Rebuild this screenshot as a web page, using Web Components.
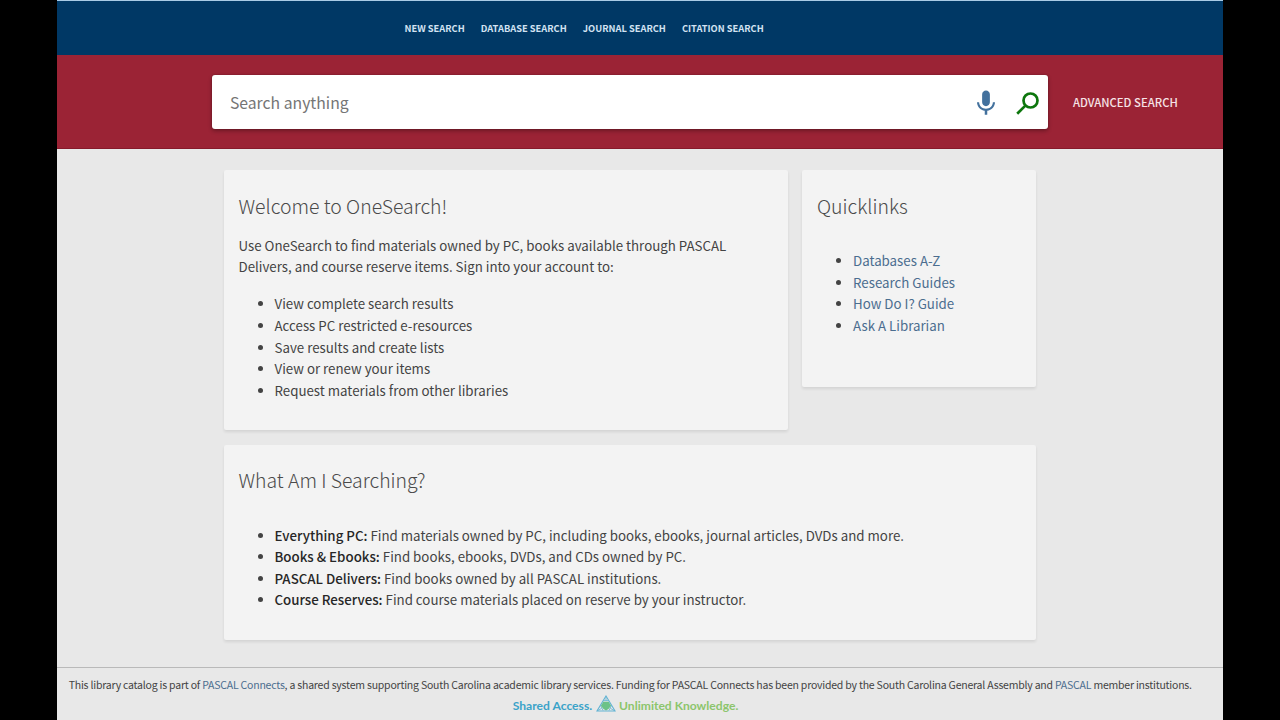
<!DOCTYPE html>
<html lang="en">
<head>
<meta charset="utf-8">
<title>OneSearch</title>
<style>
  html, body {
    margin: 0;
    height: 100%;
    overflow: hidden;
    background: #000;
  }
  body {
    font-family: "Noto Sans CJK SC", "Noto Sans", sans-serif;
    color: #434343;
    --link: #4b6d8f;
  }
</style>
</head>
<body>
<one-search></one-search>

<script>
// Top bar with the main menu
class TopMenu extends HTMLElement {
  constructor() {
    super();
    this.attachShadow({ mode: 'open' }).innerHTML = `
      <style>
        :host {
          display: flex;
          box-sizing: border-box;
          height: 55px;
          padding-left: 347.5px;
          align-items: center;
          background: #003865;
          border-top: 1px solid #a9cbe6;
        }
        nav { display: flex; gap: 16px; }
        ::slotted(span) {
          color: #d3e2f2;
          font-size: 9.3px;
          font-weight: 700;
          line-height: 20px;
          white-space: nowrap;
        }
      </style>
      <nav><slot></slot></nav>
    `;
  }
}

class SearchBar extends HTMLElement {
  constructor() {
    super();
    this.attachShadow({ mode: 'open' }).innerHTML = `
      <style>
        :host {
          display: flex;
          box-sizing: border-box;
          height: 94px;
          padding: 20.4px 0 0 155.4px;
          background: #9b2335;
          border-bottom: 1px solid #861a2b;
        }
        .box {
          display: flex;
          align-items: center;
          box-sizing: border-box;
          width: 835.5px;
          height: 54px;
          padding: 2px 6.5px 0 17.5px;
          background: #fff;
          border-radius: 3px;
          box-shadow: 0 2px 4px rgba(0, 0, 0, .3), 0 0 2px rgba(0, 0, 0, .25);
        }
        .hint {
          flex: 1;
          font-size: 15.75px;
          line-height: 24px;
          color: #757575;
        }
        svg { display: block; }
        .mic { margin-right: 12.5px; }
        .advanced {
          margin-left: 25px;
          font-size: 11.3px;
          font-weight: 500;
          line-height: 54px;
          color: #f6e3e7;
          white-space: nowrap;
        }
      </style>
      <div class="box">
        <span class="hint">Search anything</span>
        <svg class="mic" width="30" height="30" viewBox="0 0 24 24" fill="#43719d">
          <path d="M12 14.5c1.7 0 3.1-1.4 3.1-3.1V5.1C15.1 3.4 13.7 2 12 2S8.9 3.4 8.9 5.1v6.3c0 1.7 1.4 3.1 3.1 3.1zM17.5 11.3c0 3-2.6 5.2-5.5 5.2s-5.5-2.2-5.5-5.2H4.8c0 3.5 2.8 6.3 6.2 6.8v3.3h2v-3.3c3.4-.5 6.2-3.3 6.2-6.8h-1.7z"/>
        </svg>
        <svg width="28" height="28" viewBox="0 0 28 28" fill="none" stroke="#0d760d" stroke-width="2.7">
          <circle cx="17.5" cy="11.5" r="7"/>
          <path d="M12.6 16.4L4.2 24.8"/>
        </svg>
      </div>
      <span class="advanced">ADVANCED SEARCH</span>
    `;
  }
}

// Card with a title and any content below it
class InfoCard extends HTMLElement {
  constructor() {
    super();
    this.attachShadow({ mode: 'open' }).innerHTML = `
      <style>
        :host {
          display: block;
          box-sizing: border-box;
          padding: 20.5px 15px 0 14.5px;
          background: #f3f3f3;
          border-radius: 2px;
          box-shadow: 0 2px 3px rgba(0, 0, 0, .09);
          font-size: 13.3px;
          line-height: 21.6px;
        }
        h2 {
          margin: 0;
          font-size: 19.4px;
          font-weight: 300;
          line-height: 30px;
          color: #4a4a4a;
        }
        ::slotted(p) { margin: 14px 0 0 !important; }
        ::slotted(ul) { margin: 15.4px 0 0 !important; padding-left: 36px !important; }
        :host([spaced]) ::slotted(ul) { margin-top: 29.3px !important; }
      </style>
      <h2></h2>
      <slot></slot>
    `;
  }
  connectedCallback() {
    this.shadowRoot.querySelector('h2').textContent = this.getAttribute('heading');
  }
}

class PageFooter extends HTMLElement {
  constructor() {
    super();
    this.attachShadow({ mode: 'open' }).innerHTML = `
      <style>
        :host {
          display: flex;
          flex-direction: column;
          align-items: center;
          box-sizing: border-box;
          height: 53px;
          padding-top: 7px;
          border-top: 1px solid #b9b9b9;
          font-size: 10.5px;
          letter-spacing: -.21px;
          line-height: 20px;
          white-space: nowrap;
        }
        a { color: var(--link); }
        .about { margin-right: 19.5px; }
        .tagline {
          display: flex;
          align-items: center;
          margin-right: 29px;
          height: 22px;
          font-family: Lato, sans-serif;
          font-size: 12.1px;
          letter-spacing: 0;
          font-weight: 700;
        }
        .shared { color: #3ba3c9; }
        .unlimited { color: #8cc56c; }
        svg { margin: 0 3px 5px 4px; }
      </style>
      <div class="about">This library catalog is part of <a>PASCAL Connects</a>, a shared system supporting South Carolina academic library services. Funding for PASCAL Connects has been provided by the South Carolina General Assembly and <a>PASCAL</a> member institutions.</div>
      <div class="tagline">
        <span class="shared">Shared Access.</span>
        <svg width="20" height="17" viewBox="0 0 20 17" fill="none" stroke="#62b3d3">
          <path d="M10 1L19 16H1Z" stroke-width="1.1"/>
          <path d="M7.6 5.6h4.8M10 1.5v4M4.600 10.600L7 15.500M1.500 15.700l4-2.300M15.400 10.600L13 15.500M18.500 15.700l-4-2.300" stroke-width=".8"/>
          <path d="M7.300 6.800h5.400l2.400 4-2.600 3.200L10 15.600l-2.500-1.600-2.600-3.200z" fill="#6cc287" stroke="none"/>
        </svg>
        <span class="unlimited">Unlimited Knowledge.</span>
      </div>
    `;
  }
}

class OneSearch extends HTMLElement {
  constructor() {
    super();
    this.attachShadow({ mode: 'open' }).innerHTML = `
      <style>
        :host {
          display: flex;
          flex-direction: column;
          width: 1166px;
          height: 720px;
          margin: 0 auto;
          background: #e8e8e8;
        }
        main {
          flex: 1;
          display: grid;
          grid-template-columns: 564px 234px;
          grid-template-rows: 260px 195px;
          gap: 14.4px 14px;
          align-items: start;
          padding: 21.4px 0 0 167px;
        }
        .welcome { height: 260px; }
        .quick { height: 217px; padding-left: 15px; }
        .what { grid-column: 1 / 3; height: 195px; }
        a { color: var(--link); }
        b { font-weight: 500; color: #262626; }
      </style>
      <top-menu>
        <span>NEW SEARCH</span>
        <span>DATABASE SEARCH</span>
        <span>JOURNAL SEARCH</span>
        <span>CITATION SEARCH</span>
      </top-menu>
      <search-bar></search-bar>
      <main>
        <info-card class="welcome" heading="Welcome to OneSearch!">
          <p>Use OneSearch to find materials owned by PC, books available through PASCAL<br>Delivers, and course reserve items. Sign into your account to:</p>
          <ul>
            <li>View complete search results</li>
            <li>Access PC restricted e-resources</li>
            <li>Save results and create lists</li>
            <li>View or renew your items</li>
            <li>Request materials from other libraries</li>
          </ul>
        </info-card>
        <info-card class="quick" heading="Quicklinks" spaced>
          <ul>
            <li><a>Databases A-Z</a></li>
            <li><a>Research Guides</a></li>
            <li><a>How Do I? Guide</a></li>
            <li><a>Ask A Librarian</a></li>
          </ul>
        </info-card>
        <info-card class="what" heading="What Am I Searching?" spaced>
          <ul>
            <li><b>Everything PC:</b> Find materials owned by PC, including books, ebooks, journal articles, DVDs and more.</li>
            <li><b>Books &amp; Ebooks:</b> Find books, ebooks, DVDs, and CDs owned by PC.</li>
            <li><b>PASCAL Delivers:</b> Find books owned by all PASCAL institutions.</li>
            <li><b>Course Reserves:</b> Find course materials placed on reserve by your instructor.</li>
          </ul>
        </info-card>
      </main>
      <page-footer></page-footer>
    `;
  }
}

customElements.define('top-menu', TopMenu);
customElements.define('search-bar', SearchBar);
customElements.define('info-card', InfoCard);
customElements.define('page-footer', PageFooter);
customElements.define('one-search', OneSearch);
</script>
</body>
</html>
